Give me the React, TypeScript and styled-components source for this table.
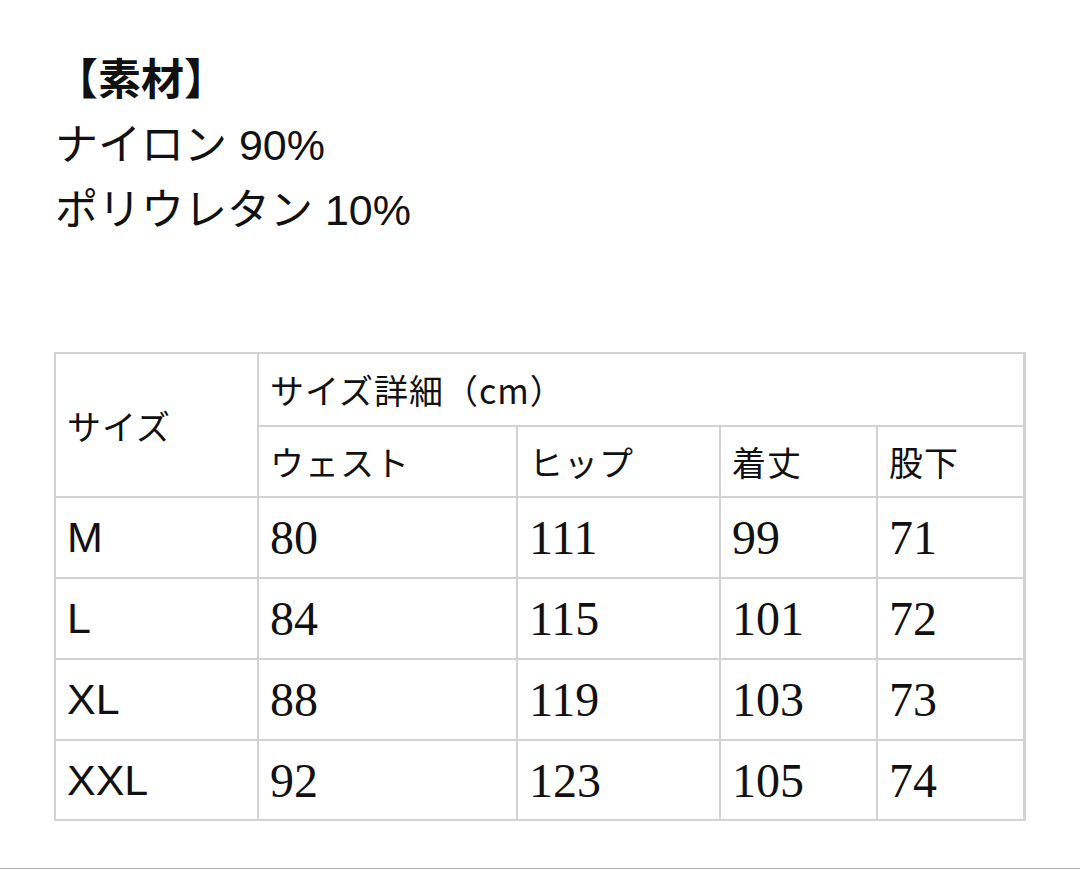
import { Fragment } from 'react';
import styled, { createGlobalStyle } from 'styled-components';

const GlobalStyle = createGlobalStyle`
    html, body {
        margin: 0;
        padding: 0;
        background: #fff;
    }
`;

const Page = styled.div`
    box-sizing: border-box;
    width: 100%;
    min-height: 869px;
    padding: 48px 0 0 54px;
    border-bottom: 1px solid #a9a9a9;
    color: #111;
`;

const MaterialWrap = styled.div`
    display: flex;
    flex-direction: column;
`;

const MaterialLine = styled.div<{ $bold?: boolean }>`
    font-family: 'Liberation Sans', 'Noto Sans CJK JP', sans-serif;
    font-size: 43px;
    line-height: 65px;
    font-weight: ${(props) => (props.$bold ? 700 : 400)};
    padding-left: 1px;
`;

const SizeTable = styled.div`
    margin-top: 109px;
    width: 972px;
    box-sizing: border-box;
    display: grid;
    grid-template-columns: 201px 257px 201px 155px 145px;
    grid-template-rows: 71px 69px 79px 79px 79px 78px;
    gap: 2px;
    padding: 2px;
    background: #d2d2d2;
`;

const Cell = styled.div<{ $kind: 'head' | 'label' | 'value'; $rowSpan?: number; $colSpan?: number }>`
    background: #fff;
    display: flex;
    align-items: center;
    padding: 0 11px;
    grid-row: ${(props) => (props.$rowSpan ? `span ${props.$rowSpan}` : 'auto')};
    grid-column: ${(props) => (props.$colSpan ? `span ${props.$colSpan}` : 'auto')};
    color: #111;
    font-family: ${(props) =>
        props.$kind === 'label'
            ? "'Liberation Sans', Arial, sans-serif"
            : props.$kind === 'value'
              ? "'Liberation Serif', 'Times New Roman', serif"
              : "'Noto Sans CJK JP', sans-serif"};
    font-size: ${(props) => (props.$kind === 'label' ? '43px' : props.$kind === 'value' ? '48px' : '34px')};
    letter-spacing: ${(props) => (props.$kind === 'head' ? '1px' : '0')};
    font-weight: 400;
    white-space: nowrap;
`;

const HEADERS = ['ウェスト', 'ヒップ', '着丈', '股下'];

const SIZE_ROWS = [
    { size: 'M', values: ['80', '111', '99', '71'] },
    { size: 'L', values: ['84', '115', '101', '72'] },
    { size: 'XL', values: ['88', '119', '103', '73'] },
    { size: 'XXL', values: ['92', '123', '105', '74'] }
];

const App = () => {
    return (
        <>
            <GlobalStyle />
            <Page>
                <MaterialWrap>
                    <MaterialLine $bold>【素材】</MaterialLine>
                    <MaterialLine>ナイロン 90%</MaterialLine>
                    <MaterialLine>ポリウレタン 10%</MaterialLine>
                </MaterialWrap>
                <SizeTable>
                    <Cell $kind="head" $rowSpan={2}>サイズ</Cell>
                    <Cell $kind="head" $colSpan={4}>サイズ詳細（cm）</Cell>
                    {HEADERS.map((label) => (
                        <Cell key={label} $kind="head">{label}</Cell>
                    ))}
                    {SIZE_ROWS.map((row) => (
                        <Fragment key={row.size}>
                            <Cell $kind="label">{row.size}</Cell>
                            {row.values.map((value, index) => (
                                <Cell key={`${row.size}-${index}`} $kind="value">{value}</Cell>
                            ))}
                        </Fragment>
                    ))}
                </SizeTable>
            </Page>
        </>
    );
};

export default App;
